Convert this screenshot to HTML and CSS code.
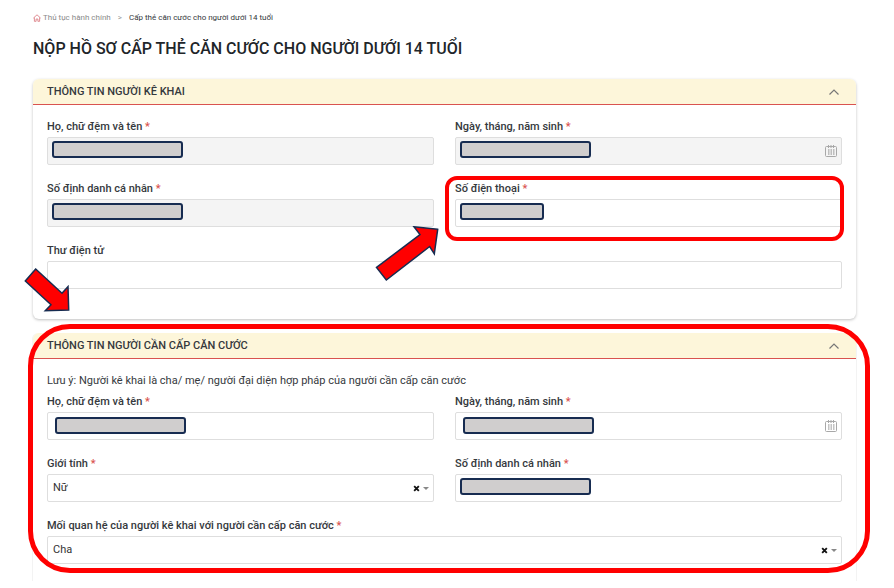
FILE: index.html
```html
<!DOCTYPE html>
<html lang="vi">
<head>
    <meta charset="UTF-8">
    <title>Cấp thẻ căn cước cho người dưới 14 tuổi</title>
    <meta name="viewport" content="width=device-width, initial-scale=1.0">
    <link rel="stylesheet" href="styles.css">
</head>
<body>
    <!-- Icons -->
    <svg class="sprite" aria-hidden="true">
        <symbol id="calendar" viewBox="0 0 12 12">
            <rect x=".5" y="1.500" width="11" height="10" rx="1" fill="none" stroke="#a8a8a8"/>
            <path d="M3.500 0v3M6 0v3M8.500 0v3" fill="none" stroke="#a8a8a8"/>
            <path d="M3 5h7M3 7h7M3 9h7" fill="none" stroke="#888" stroke-dasharray="1.500 1"/>
        </symbol>
        <symbol id="chevron" viewBox="0 0 12 8">
            <path d="M1.500 6.500 6 2l4.500 4.500" fill="none" stroke="#777" stroke-width="1.200"/>
        </symbol>
    </svg>

    <div class="page">
        <nav class="breadcrumb">
            <a href="#">
                <svg class="home-icon" viewBox="0 0 8 8" aria-hidden="true">
                    <path d="M.4 4.100 4 .8l3.600 3.300M1.400 3.500v3.800h1.700V5h1.800v2.300h1.700V3.500" fill="none" stroke="#d9747b" stroke-width=".8"/>
                </svg>
                Thủ tục hành chính</a>
            <span class="separator">&gt;</span>
            <span>Cấp thẻ căn cước cho người dưới 14 tuổi</span>
        </nav>

        <h1>NỘP HỒ SƠ CẤP THẺ CĂN CƯỚC CHO NGƯỜI DƯỚI 14 TUỔI</h1>

        <!-- Declarant -->
        <section class="panel">
            <header class="panel-header">
                <h2>THÔNG TIN NGƯỜI KÊ KHAI</h2>
                <button class="toggle" type="button" aria-label="Thu gọn"><svg><use href="#chevron"/></svg></button>
            </header>
            <div class="panel-body">
                <div class="field">
                    <label for="name1">Họ, chữ đệm và tên <em>*</em></label>
                    <div class="control">
                        <input type="text" id="name1" disabled>
                        <span class="mask"></span>
                    </div>
                </div>
                <div class="field">
                    <label for="birth1">Ngày, tháng, năm sinh <em>*</em></label>
                    <div class="control">
                        <input type="text" id="birth1" disabled>
                        <svg class="calendar"><use href="#calendar"/></svg>
                        <span class="mask"></span>
                    </div>
                </div>
                <div class="field">
                    <label for="id1">Số định danh cá nhân <em>*</em></label>
                    <div class="control">
                        <input type="text" id="id1" disabled>
                        <span class="mask"></span>
                    </div>
                </div>
                <div class="field">
                    <label for="phone">Số điện thoại <em>*</em></label>
                    <div class="control">
                        <input type="text" id="phone">
                        <span class="mask mask-short"></span>
                    </div>
                    <span class="highlight highlight-field"></span>
                    <svg class="arrow arrow-up" viewBox="0 0 64 56" aria-hidden="true">
                        <path d="M62.700 3.300 39 .8l6 7.700-43.500 33L11.300 54l43.400-33.500 4.600 7.300z"/>
                    </svg>
                </div>
                <div class="field wide">
                    <label for="email">Thư điện tử</label>
                    <div class="control">
                        <input type="text" id="email">
                    </div>
                </div>
            </div>
        </section>

        <!-- Card holder -->
        <section class="panel panel-open">
            <header class="panel-header">
                <h2>THÔNG TIN NGƯỜI CẦN CẤP CĂN CƯỚC</h2>
                <button class="toggle" type="button" aria-label="Thu gọn"><svg><use href="#chevron"/></svg></button>
            </header>
            <div class="panel-body">
                <p class="note">Lưu ý: Người kê khai là cha/ mẹ/ người đại diện hợp pháp của người cần cấp căn cước</p>
                <div class="field">
                    <label for="name2">Họ, chữ đệm và tên <em>*</em></label>
                    <div class="control">
                        <input type="text" id="name2">
                        <span class="mask mask-indent"></span>
                    </div>
                </div>
                <div class="field">
                    <label for="birth2">Ngày, tháng, năm sinh <em>*</em></label>
                    <div class="control">
                        <input type="text" id="birth2">
                        <svg class="calendar"><use href="#calendar"/></svg>
                        <span class="mask mask-indent"></span>
                    </div>
                </div>
                <div class="field">
                    <label for="gender">Giới tính <em>*</em></label>
                    <div class="control">
                        <select id="gender">
                            <option>Nữ</option>
                            <option>Nam</option>
                        </select>
                        <button class="clear" type="button" aria-label="Xóa"><svg viewBox="0 0 6 6"><path d="m1 1 4 4M5 1 1 5"/></svg></button>
                        <span class="caret"></span>
                    </div>
                </div>
                <div class="field">
                    <label for="id2">Số định danh cá nhân <em>*</em></label>
                    <div class="control">
                        <input type="text" id="id2">
                        <span class="mask"></span>
                    </div>
                </div>
                <div class="field wide">
                    <label for="relation">Mối quan hệ của người kê khai với người cần cấp căn cước <em>*</em></label>
                    <div class="control">
                        <select id="relation">
                            <option>Cha</option>
                            <option>Mẹ</option>
                        </select>
                        <button class="clear" type="button" aria-label="Xóa"><svg viewBox="0 0 6 6"><path d="m1 1 4 4M5 1 1 5"/></svg></button>
                        <span class="caret"></span>
                    </div>
                </div>
            </div>
            <span class="highlight highlight-panel"></span>
            <svg class="arrow arrow-down" viewBox="0 0 46 45" aria-hidden="true">
                <path d="M11.700 2 1.300 14 27 37.800l-5.700 6L44.700 43 44 19.700l-6 6.600z"/>
            </svg>
        </section>
    </div>
</body>
</html>
```

FILE: styles.css
```css
* {
    box-sizing: border-box;
    margin: 0;
    padding: 0;
}

body {
    background-color: #fff;
    color: #35393d;
    font-family: Roboto, "Liberation Sans", sans-serif;
    font-size: 11px;
    line-height: 16px;
}

.sprite {
    position: absolute;
    width: 0;
    height: 0;
}

.page {
    padding: 10px 38px 0 33px;
}

/* Breadcrumb and title */
.breadcrumb {
    display: flex;
    align-items: center;
    gap: 7px;
    font-size: 8px;
}

.breadcrumb a {
    display: flex;
    align-items: center;
    gap: 2px;
    color: #8a8a8a;
    text-decoration: none;
}

.home-icon {
    width: 8px;
    height: 8px;
}

.separator {
    color: #999;
}

h1 {
    margin: 11px 0 18px;
    color: #212529;
    font-size: 16px;
    font-weight: 500;
    line-height: 24px;
}

/* Panels */
.panel {
    position: relative;
    margin-bottom: 14px;
    border-radius: 6px;
    box-shadow: 0 1px 3px rgba(0, 0, 0, 0.25);
}

.panel-open {
    margin-bottom: 0;
    border-radius: 6px 6px 0 0;
    box-shadow: -1px 0 #f3f3f3, 1px 0 #f3f3f3;
}

.panel-header {
    display: flex;
    align-items: center;
    justify-content: space-between;
    height: 26px;
    padding: 0 16px 0 14px;
    background-color: #fdf6da;
    border-bottom: 1px solid #d9534f;
    border-radius: 6px 6px 0 0;
}

h2 {
    font-size: 11px;
    font-weight: 500;
}

.toggle {
    display: flex;
    background: none;
    border: none;
    cursor: pointer;
}

.toggle svg {
    width: 12px;
    height: 8px;
}

.panel-body {
    display: grid;
    grid-template-columns: 1fr 1fr;
    gap: 16px 21px;
    padding: 14px 14px 30px;
}

.panel-open .panel-body {
    padding-bottom: 17px;
}

.note {
    grid-column: 1 / -1;
    margin-bottom: -11px;
}

/* Fields */
.field {
    position: relative;
    display: flex;
    flex-direction: column;
    gap: 2px;
}

.wide {
    grid-column: 1 / -1;
}

label {
    font-weight: 500;
}

em {
    color: #d9534f;
    font-style: normal;
}

.control {
    position: relative;
}

input,
select {
    display: block;
    width: 100%;
    height: 28px;
    padding: 0 5px;
    background-color: #fff;
    border: 1px solid #dedede;
    border-radius: 2px;
    color: #333;
    font: inherit;
    appearance: none;
}

input:disabled {
    background-color: #f4f4f4;
}

.calendar {
    position: absolute;
    top: 8px;
    right: 5px;
    width: 12px;
    height: 12px;
}

.clear {
    position: absolute;
    top: 11px;
    right: 14px;
    display: flex;
    background: none;
    border: none;
    cursor: pointer;
}

.clear svg {
    width: 7px;
    height: 7px;
    fill: none;
    stroke: #111;
    stroke-width: 1.6;
}

.caret {
    position: absolute;
    top: 13px;
    right: 5px;
    border: 3px solid transparent;
    border-top-color: #888;
    border-bottom: none;
}

/* Covers over personal data */
.mask {
    position: absolute;
    top: 4px;
    left: 5px;
    width: 131px;
    height: 17px;
    background-color: #d0cece;
    border: 2px solid #172c51;
    border-radius: 3px;
}

.mask-short {
    width: 84px;
}

.mask-indent {
    top: 5px;
    left: 8px;
}

/* Red guide marks */
.highlight {
    position: absolute;
    border: 4px solid #f00;
    pointer-events: none;
}

.highlight-field {
    inset: -5px -2px -14px -10px;
    border-radius: 12px;
}

.highlight-panel {
    inset: -9px -14px 8px -5px;
    border-width: 5px;
    border-radius: 42px;
}

.arrow {
    position: absolute;
    z-index: 1;
    fill: #f00;
    stroke: #172c51;
    stroke-width: 1.5;
    pointer-events: none;
}

.arrow-up {
    top: 45px;
    left: -80px;
    width: 64px;
    height: 56px;
}

.arrow-down {
    top: -66px;
    left: -9px;
    width: 46px;
    height: 45px;
}
```
